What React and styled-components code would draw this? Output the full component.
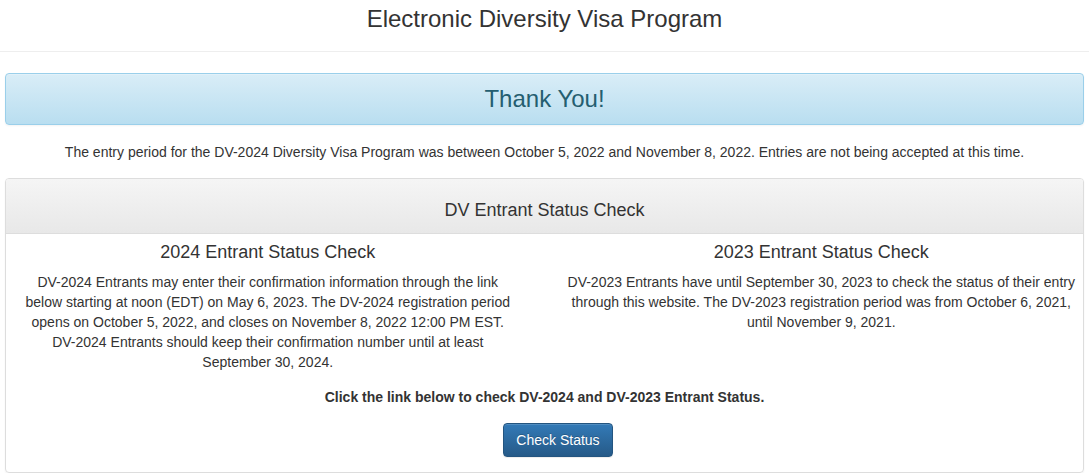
import React from "react";
import styled, { createGlobalStyle } from "styled-components";

const GlobalStyle = createGlobalStyle`
  body {
    margin: 0;
    background: #fff;
    font-family: "Liberation Sans", Arial, Helvetica, sans-serif;
    font-size: 14px;
    line-height: 20px;
    color: #333;
  }
  * { box-sizing: border-box; }
`;

const Header = styled.header`
  border-bottom: 1px solid #eee;
  padding: 6px 0 19px;
  text-align: center;
  h1 {
    margin: 0;
    font-size: 24px;
    line-height: 26px;
    font-weight: 400;
  }
`;

const Main = styled.main`
  padding: 21px 5px 0;
`;

const Alert = styled.div`
  padding: 12px 15px;
  border: 1px solid #9acfea;
  border-radius: 4px;
  background-image: linear-gradient(to bottom, #d9edf7 0%, #b9def0 100%);
  box-shadow: inset 0 1px 0 rgba(255, 255, 255, 0.25), 0 1px 2px rgba(0, 0, 0, 0.05);
  color: #245e70;
  text-align: center;
  h2 {
    margin: 0;
    font-size: 24px;
    line-height: 26px;
    font-weight: 400;
  }
`;

const Notice = styled.p`
  margin: 17px 0 16px;
  text-align: center;
`;

const Panel = styled.section`
  border: 1px solid #ddd;
  border-radius: 4px;
  box-shadow: 0 1px 2px rgba(0, 0, 0, 0.05);
  overflow: hidden;
`;

const PanelHeading = styled.div`
  padding: 21px 15px 13px;
  border-bottom: 1px solid #ddd;
  background-image: linear-gradient(to bottom, #f5f5f5 0%, #e8e8e8 100%);
  text-align: center;
  h3 {
    margin: 0;
    font-size: 18px;
    line-height: 20px;
    font-weight: 400;
  }
`;

const PanelBody = styled.div`
  padding: 8px 0 15px;
  text-align: center;
`;

const Row = styled.div`
  display: grid;
  grid-template-columns: 1fr 1fr;
  margin: 0 -15px;
`;

const Col = styled.div`
  padding: 0 15px;
  h4 {
    margin: 0 0 10px;
    font-size: 18px;
    line-height: 20px;
    font-weight: 400;
  }
  p {
    margin: 0 auto;
    max-width: ${(p) => p.$textWidth}px;
  }
`;

const Lead = styled.p`
  margin: 15px 0 16px;
  font-weight: 700;
`;

const Button = styled.button`
  display: inline-block;
  margin-left: 27px;
  padding: 6px 12px;
  font-family: inherit;
  font-size: 14px;
  line-height: 20px;
  color: #fff;
  border: 1px solid #245580;
  border-radius: 4px;
  background-image: linear-gradient(to bottom, #337ab7 0%, #265a88 100%);
  box-shadow: inset 0 1px 0 rgba(255, 255, 255, 0.15), 0 1px 1px rgba(0, 0, 0, 0.075);
  text-shadow: 0 -1px 0 rgba(0, 0, 0, 0.2);
  cursor: pointer;
`;

export default function App() {
  return (
    <>
      <GlobalStyle />
      <Header>
        <h1>Electronic Diversity Visa Program</h1>
      </Header>
      <Main>
        <Alert>
          <h2>Thank You!</h2>
        </Alert>
        <Notice>
          The entry period for the DV-2024 Diversity Visa Program was between October 5, 2022 and
          November 8, 2022. Entries are not being accepted at this time.
        </Notice>
        <Panel>
          <PanelHeading>
            <h3>DV Entrant Status Check</h3>
          </PanelHeading>
          <PanelBody>
            <Row>
              <Col $textWidth={495}>
                <h4>2024 Entrant Status Check</h4>
                <p>
                  DV-2024 Entrants may enter their confirmation information through the link below
                  starting at noon (EDT) on May 6, 2023. The DV-2024 registration period opens on
                  October 5, 2022, and closes on November 8, 2022 12:00 PM EST. DV-2024 Entrants
                  should keep their confirmation number until at least September 30, 2024.
                </p>
              </Col>
              <Col $textWidth={522}>
                <h4>2023 Entrant Status Check</h4>
                <p>
                  DV-2023 Entrants have until September 30, 2023 to check the status of their entry
                  through this website. The DV-2023 registration period was from October 6, 2021,
                  until November 9, 2021.
                </p>
              </Col>
            </Row>
            <Lead>Click the link below to check DV-2024 and DV-2023 Entrant Status.</Lead>
            <Button type="button">Check Status</Button>
          </PanelBody>
        </Panel>
      </Main>
    </>
  );
}
